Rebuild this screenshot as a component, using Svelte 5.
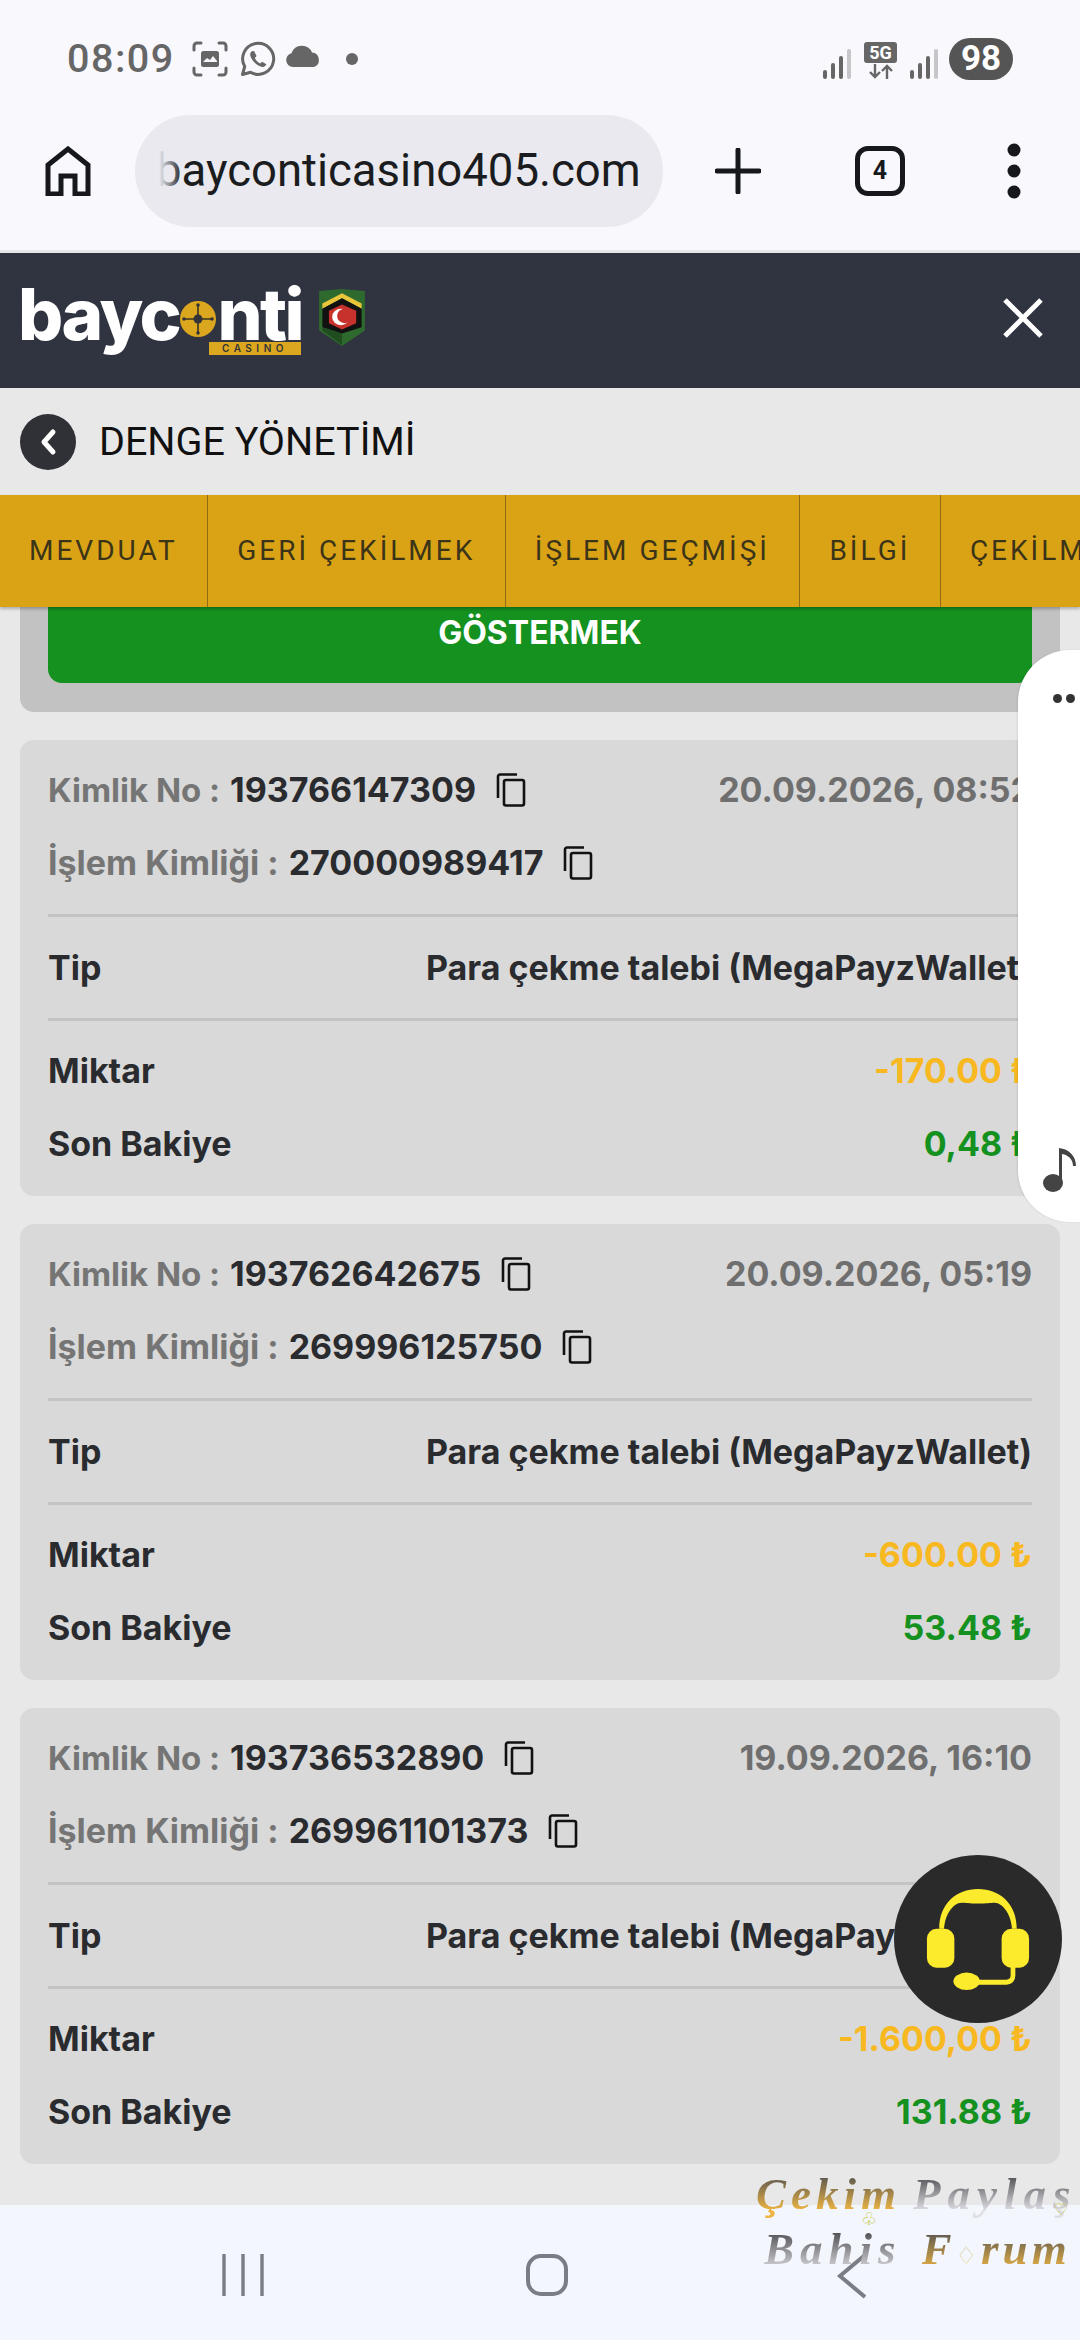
<script>
  const cards = [
    { id: '193766147309', date: '20.09.2026, 08:52', tx: '270000989417', amount: '-170.00 ₺', balance: '0,48 ₺' },
    { id: '193762642675', date: '20.09.2026, 05:19', tx: '269996125750', amount: '-600.00 ₺', balance: '53.48 ₺' },
    { id: '193736532890', date: '19.09.2026, 16:10', tx: '269961101373', amount: '-1.600,00 ₺', balance: '131.88 ₺' }
  ];
  const tabs = ['MEVDUAT', 'GERİ ÇEKİLMEK', 'İŞLEM GEÇMİŞİ', 'BİLGİ', 'ÇEKİLME'];
</script>

{#snippet copy()}
  <svg class="copy" viewBox="0 0 30 34" width="30" height="34" fill="none" stroke="#111" stroke-width="2.6">
    <rect x="8" y="7" width="20" height="25.5" rx="2" />
    <path d="M2 25V3.5A2 2 0 0 1 4 1.5H21" />
  </svg>
{/snippet}

{#snippet signal()}
  <svg viewBox="0 0 28 31" width="28" height="31">
    <rect x="0" y="21" width="4" height="9" rx="2" fill="#666" />
    <rect x="8" y="14" width="4" height="16" rx="2" fill="#666" />
    <rect x="16" y="7" width="4" height="23" rx="2" fill="#666" />
    <rect x="24" y="0" width="4" height="30" rx="2" fill="#c6c6c9" />
  </svg>
{/snippet}

<div class="screen">
  <div class="status">
    <div class="status-left">
      <span class="time">08:09</span>
      <svg class="s1" viewBox="0 0 36 36" width="36" height="36" fill="none" stroke="#666" stroke-width="3" stroke-linecap="round">
        <path d="M2 9V5a3 3 0 0 1 3-3h4M27 2h4a3 3 0 0 1 3 3v4M34 27v4a3 3 0 0 1-3 3h-4M9 34H5a3 3 0 0 1-3-3v-4" />
        <rect x="9" y="10" width="18" height="16" rx="2.5" fill="#666" stroke="none" />
        <path d="M11 21l4-4 3 2 3-4 4 5v1H11z" fill="#f8f8fd" stroke="none" />
      </svg>
      <svg class="s2" viewBox="0 0 36 36" width="36" height="36" fill="none">
        <path d="M2.5 33.5l2.2-8A15.5 15.5 0 1 1 10.500 31.300z" stroke="#666" stroke-width="3" stroke-linejoin="round" />
        <path d="M12.500 10c-1.500.6-2.500 2-2.300 4 .5 4.500 6.500 11 12 12 2 .2 3.600-1 4.200-2.700l-4.300-2.600-2 1.700c-2-.8-4.400-3.200-5.200-5.400l1.600-2-2.300-4.800z" fill="#666" />
      </svg>
      <svg class="s3" viewBox="0 0 36 24" width="36" height="24">
        <path d="M8 23a7 7 0 0 1-1.500-13.800A11 11 0 0 1 27 8.500 7.500 7.500 0 0 1 29 23z" fill="#666" />
      </svg>
      <span class="dot"></span>
    </div>
    <div class="status-right">
      {@render signal()}
      <div class="fiveg">
        <span class="fg-box">5G</span>
        <svg viewBox="0 0 26 15" width="26" height="15" fill="none" stroke="#666" stroke-width="2.400">
          <path d="M7 0v13M2 8l5 5 5-5M19 15V2M14 7l5-5 5 5" />
        </svg>
      </div>
      {@render signal()}
      <span class="battery">98</span>
    </div>
  </div>

  <div class="toolbar">
    <svg class="home" viewBox="0 0 46 50" width="46" height="50" fill="none" stroke="#17181c" stroke-width="5" stroke-linejoin="miter">
      <path d="M3 48V19L23 3l20 16v29H30V30H16v18z" />
    </svg>
    <div class="url">
      <span class="url-text">bayconticasino405.com</span>
      <span class="url-fade"></span>
    </div>
    <svg class="plus" viewBox="0 0 46 46" width="46" height="46" stroke="#17181c" stroke-width="5" stroke-linecap="round">
      <path d="M23 2v42M2 23h42" />
    </svg>
    <div class="tabcount">4</div>
    <svg class="more" viewBox="0 0 14 56" width="14" height="56" fill="#17181c">
      <circle cx="7" cy="7" r="6.500" /><circle cx="7" cy="28" r="6.500" /><circle cx="7" cy="49" r="6.500" />
    </svg>
  </div>

  <header class="site">
    <div class="logo">
      <div class="wordmark">
        <span class="wm">bayc</span>
        <svg class="target" viewBox="0 0 36 36" width="36" height="36">
          <circle cx="18" cy="18" r="18" fill="#dba71f" />
          <path d="M18 3v30M3 18h30" stroke="#3a3420" stroke-width="1.600" />
          <circle cx="18" cy="18" r="4.500" fill="#33343a" />
          <circle cx="18" cy="4" r="1.800" fill="#33343a" /><circle cx="18" cy="32" r="1.800" fill="#33343a" />
          <circle cx="4" cy="18" r="1.800" fill="#33343a" /><circle cx="32" cy="18" r="1.800" fill="#33343a" />
        </svg>
        <span class="wm">nti</span>
      </div>
      <div class="casino">CASINO</div>
    </div>
    <svg class="shield" viewBox="0 0 44 56" width="48" height="58" preserveAspectRatio="none">
      <path d="M1 2l21-2 21 2v38L22 55 1 40z" fill="#2e6a2d" />
      <path d="M4 14L22 4l18 10v5L22 9 4 19z" fill="#e8c53a" />
      <path d="M4 19L22 9l18 10v18L22 43 4 37z" fill="#111" />
      <path d="M10 21l12-6 13 6v12l-13 6-12-6z" fill="#c8322c" />
      <circle cx="21" cy="27" r="8" fill="#fff" /><circle cx="24.500" cy="26" r="7" fill="#c8322c" />
      <path d="M4 37l18 6v11L4 40z" fill="#1f4d20" />
    </svg>
    <svg class="close" viewBox="0 0 40 40" width="40" height="40" stroke="#fff" stroke-width="5">
      <path d="M2 2l36 36M38 2L2 38" />
    </svg>
  </header>

  <div class="title">
    <span class="back">
      <svg viewBox="0 0 18 28" width="18" height="28" fill="none" stroke="#fff" stroke-width="5" stroke-linecap="round" stroke-linejoin="round"><path d="M14 4L5 14l9 10" /></svg>
    </span>
    <span class="title-text">DENGE YÖNETİMİ</span>
  </div>

  <nav class="tabs">
    {#each tabs as t}
      <div class="tab">{t}</div>
    {/each}
  </nav>

  <main class="content">
    <div class="panel">
      <div class="show">GÖSTERMEK</div>
    </div>
    {#each cards as c}
      <section class="card">
        <div class="row">
          <div class="idgroup">
            <span class="lbl">Kimlik No :</span>
            <span class="val">{c.id}</span>
            {@render copy()}
          </div>
          <span class="date">{c.date}</span>
        </div>
        <div class="row">
          <div class="idgroup">
            <span class="lbl long">İşlem Kimliği :</span>
            <span class="val">{c.tx}</span>
            {@render copy()}
          </div>
        </div>
        <div class="rule top"></div>
        <div class="row tip">
          <span class="val">Tip</span>
          <span class="val">Para çekme talebi (MegaPayzWallet)</span>
        </div>
        <div class="rule"></div>
        <div class="row first">
          <span class="val">Miktar</span>
          <span class="amount">{c.amount}</span>
        </div>
        <div class="row">
          <span class="val">Son Bakiye</span>
          <span class="balance">{c.balance}</span>
        </div>
      </section>
    {/each}
  </main>

  <footer class="navbar">
    <svg viewBox="0 0 44 44" width="44" height="44" stroke="#7a7d84" stroke-width="3.400">
      <path d="M3 1v42M22 1v42M41 1v42" />
    </svg>
    <svg viewBox="0 0 44 44" width="44" height="44" fill="none" stroke="#7a7d84" stroke-width="4">
      <rect x="3" y="3" width="38" height="38" rx="13" />
    </svg>
    <svg viewBox="0 0 32 46" width="32" height="46" fill="none" stroke="#7a7d84" stroke-width="4">
      <path d="M29 2L4 23l25 21" />
    </svg>
  </footer>

  <aside class="side">
    <div class="side-dots"><span></span><span></span></div>
    <svg class="note" viewBox="0 0 40 44" width="40" height="44" fill="#444">
      <ellipse cx="11" cy="35" rx="10" ry="9" />
      <path d="M17 35V0c10 1 17 8 17 18h-3c0-7-5-11-11-12v29z" />
    </svg>
  </aside>

  <div class="support">
    <svg viewBox="0 0 110 110" width="104" height="107" preserveAspectRatio="none">
      <path d="M14 44C14 18 32 3 55 3s41 15 41 41h-5c-1-12-6-20-11-24-7-5-8-2-25-2s-18-3-25 2c-5 4-10 12-11 24z" fill="#fcea2c" />
      <rect x="1" y="44" width="29" height="40" rx="10" fill="#fcea2c" />
      <rect x="80" y="44" width="29" height="40" rx="10" fill="#fcea2c" />
      <path d="M92 82v10q0 6-7 7H50" fill="none" stroke="#fcea2c" stroke-width="5" />
      <ellipse cx="43" cy="98" rx="14" ry="9" fill="#fcea2c" />
    </svg>
  </div>

  <div class="mark">
    <div class="mark-a"><span class="gold">Çekim</span><span class="silver wide">Paylaş</span></div>
    <div class="mark-b"><span class="silver">Bahis</span><span class="gold narrow">F<i class="suit">♢</i>rum</span></div>
    <i class="club">♧</i>
    <i class="heart">♡</i>
  </div>
</div>

<style>
  :global(body) { margin: 0; }
  .screen {
    position: relative;
    width: 1080px;
    height: 2340px;
    overflow: hidden;
    display: flex;
    flex-direction: column;
    background: #e8e8e8;
    font-family: Inter, "Noto Sans", sans-serif;
  }
  .status {
    height: 100px;
    flex: none;
    background: #f8f8fd;
    display: flex;
    align-items: flex-start;
    justify-content: space-between;
    padding: 38px 67px 0 67px;
    box-sizing: border-box;
  }
  .status-left { display: flex; align-items: center; height: 42px; }
  .time { font: 500 39.500px/42px Roboto, sans-serif; color: #666; letter-spacing: 1.500px; width: 125px; }
  .s2 { margin-left: 12px; }
  .s3 { margin-left: 9px; margin-bottom: 6px; }
  .dot { width: 12px; height: 12px; border-radius: 50%; background: #666; margin-left: 25px; }
  .status-right { display: flex; align-items: flex-end; height: 42px; }
  .status-right svg { display: block; }
  .fiveg { display: flex; flex-direction: column; align-items: center; margin: 0 13px; width: 33px; height: 38px; }
  .fg-box {
    width: 33px; height: 21px; background: #666; color: #fff; border-radius: 3px;
    font: 700 18px/21px Roboto, sans-serif; text-align: center; margin-bottom: 1px;
  }
  .battery {
    width: 64px; height: 42px; border-radius: 21px; background: #555; color: #fff;
    font: 700 35px/42px Roboto, sans-serif; text-align: center; margin-left: 11px;
  }
  .toolbar {
    height: 150px;
    flex: none;
    background: #f8f8fd;
    display: flex;
    align-items: center;
    padding: 0 0 9px 45px;
    box-sizing: border-box;
  }
  .url {
    position: relative;
    width: 528px; height: 112px; border-radius: 56px; background: #e9e9ef;
    margin-left: 44px; overflow: hidden;
    display: flex; align-items: center; padding-left: 21px; box-sizing: border-box;
  }
  .url-text { font: 400 45.500px/60px Roboto, sans-serif; color: #1b1c20; white-space: nowrap; }
  .url-fade { position: absolute; left: 20px; top: 0; width: 28px; height: 100%; background: linear-gradient(90deg, #e9e9ef 15%, rgba(233,233,239,0)); }
  .plus { margin-left: 52px; }
  .tabcount {
    width: 50px; height: 50px; box-sizing: border-box; border: 5px solid #17181c; border-radius: 13px;
    margin-left: 94px; font: 700 25px/40px Roboto, sans-serif; text-align: center; color: #17181c;
  }
  .more { margin-left: 102px; }
  .site {
    height: 138px;
    flex: none;
    box-sizing: border-box;
    border-top: 3px solid #e6e6ea;
    background: #303340;
    display: flex;
    align-items: flex-start;
    padding: 30px 37px 0 18px;
  }
  .logo { width: 283px; height: 72px; display: flex; flex-direction: column; align-items: flex-end; }
  .wordmark {
    display: flex; align-items: center; width: 100%; height: 52px; margin-top: 5px; color: #fff;
    letter-spacing: -2.500px; white-space: nowrap;
  }
  .wm { display: block; font: 800 71px/52px Inter, sans-serif; height: 52px; }
  .target { margin: 10px 1px 0 1px; flex: none; }
  .casino {
    width: 92px; height: 13px; background: #dba71f; color: #33343a; margin-top: 2px;
    font: 600 10px/13px Inter, sans-serif; letter-spacing: 4.500px; text-align: center;
  }
  .shield { margin: 6px 0 0 17px; }
  .close { margin: 15px 0 0 auto; }
  .title {
    height: 107px;
    flex: none;
    display: flex;
    align-items: center;
    padding-left: 20px;
    gap: 23px;
  }
  .back { width: 56px; height: 56px; border-radius: 50%; background: #2f3136; display: flex; align-items: center; justify-content: center; }
  .title-text { font: 400 39.500px/50px Roboto, sans-serif; color: #111; }
  .tabs {
    height: 112px;
    flex: none;
    display: flex;
    background: #daa316;
    overflow: hidden;
    box-shadow: 0 2px 3px rgba(0,0,0,.25);
    position: relative;
    z-index: 1;
  }
  .tab {
    flex: none;
    padding: 0 29.500px 0 29px;
    border-right: 1.500px solid #8f6d14;
    display: flex; align-items: center;
    font: 400 28px/40px Roboto, sans-serif;
    letter-spacing: 3px;
    color: #3c3418;
    white-space: nowrap;
  }
  .content {
    flex: 1;
    min-height: 0;
    overflow: hidden;
    padding: 0 20px;
    display: flex;
    flex-direction: column;
    gap: 28px;
  }
  .panel {
    flex: none;
    height: 105px;
    box-sizing: border-box;
    background: #c2c2c2;
    border-radius: 0 0 14px 14px;
    padding: 0 28px;
  }
  .show {
    height: 76px;
    background: #14911f;
    border-radius: 0 0 14px 14px;
    color: #fff;
    font: 700 32px/52px Inter, sans-serif;
    text-align: center;
  }
  .card {
    flex: none;
    height: 456px;
    box-sizing: border-box;
    background: #d9d9d9;
    border-radius: 14px;
    padding: 13px 28px 0;
  }
  .row {
    height: 73px;
    display: flex;
    align-items: center;
    justify-content: space-between;
    white-space: nowrap;
  }
  .row.tip { height: 101px; }
  .row.first { margin-top: 13px; }
  .rule { height: 3px; background: #c3c3c3; }
  .rule.top { margin-top: 15px; }
  .idgroup { display: flex; align-items: center; }
  .lbl { font: 700 33px/44px Inter, sans-serif; color: #757575; margin-right: 10px; }
  .lbl.long { font-size: 34px; }
  .val { font: 700 34px/44px Inter, sans-serif; color: #2a2b2f; }
  .date { font: 700 34px/44px Inter, sans-serif; color: #6f6f6f; }
  .amount { font: 700 34px/44px Inter, sans-serif; color: #f8b81f; }
  .balance { font: 700 34px/44px Inter, sans-serif; color: #14911f; }
  .copy { margin-left: 20px; flex: none; }
  .navbar {
    height: 135px;
    flex: none;
    background: #f3f6fd;
    position: relative;
    display: grid;
    grid-template-columns: 221px 44px 260px 44px 267px 32px;
    grid-template-rows: 1fr;
    align-items: start;
    padding-top: 48px;
    box-sizing: border-box;
  }
  .navbar svg:nth-child(1) { grid-column: 2; }
  .navbar svg:nth-child(2) { grid-column: 4; }
  .navbar svg:nth-child(3) { grid-column: 6; }
  .side {
    position: absolute;
    left: 1018px; top: 650px;
    width: 100px; height: 572px;
    box-sizing: border-box;
    background: #fff;
    border-radius: 52px 0 0 52px;
    box-shadow: -1px 0 2px rgba(0,0,0,.08);
    z-index: 2;
  }
  .side-dots { position: absolute; left: 35px; top: 44px; display: flex; gap: 4px; }
  .side-dots span { width: 9px; height: 9px; border-radius: 50%; background: #333; }
  .note { position: absolute; left: 24px; top: 498px; }
  .support {
    position: absolute;
    left: 894px; top: 1855px;
    width: 168px; height: 168px;
    border-radius: 50%;
    background: #2b2a2b;
    display: flex; align-items: center; justify-content: center;
    z-index: 3;
  }
  .mark {
    position: absolute;
    left: 756px; top: 2166px;
    width: 324px;
    z-index: 4;
    font: italic 700 45px/56px "Liberation Serif", serif;
    white-space: nowrap;
    letter-spacing: 5px;
  }
  .mark-a { display: flex; gap: 12px; }
  .mark-a .wide { letter-spacing: 7px; }
  .mark-b { display: flex; gap: 20px; margin-left: 8px; margin-top: -1px; letter-spacing: 6px; }
  .mark-b .narrow { letter-spacing: 4px; }
  .gold, .silver {
    -webkit-background-clip: text;
    background-clip: text;
    color: transparent;
  }
  .gold { background-image: linear-gradient(180deg, #5f5a50 20%, #eeb542 80%); }
  .silver { background-image: linear-gradient(180deg, #56565a 20%, #dedee4 80%); }
  .suit { font-style: normal; font-family: "DejaVu Sans", sans-serif; font-size: 24px; color: #fff; -webkit-text-fill-color: #fff; }
  .club, .heart { position: absolute; font-style: normal; font-family: "DejaVu Sans", sans-serif; line-height: 1; letter-spacing: 0; }
  .club { left: 105px; top: 44px; font-size: 18px; color: #c6c63a; }
  .heart { left: 298px; top: 36px; font-size: 16px; color: #c6c63a; }
</style>
